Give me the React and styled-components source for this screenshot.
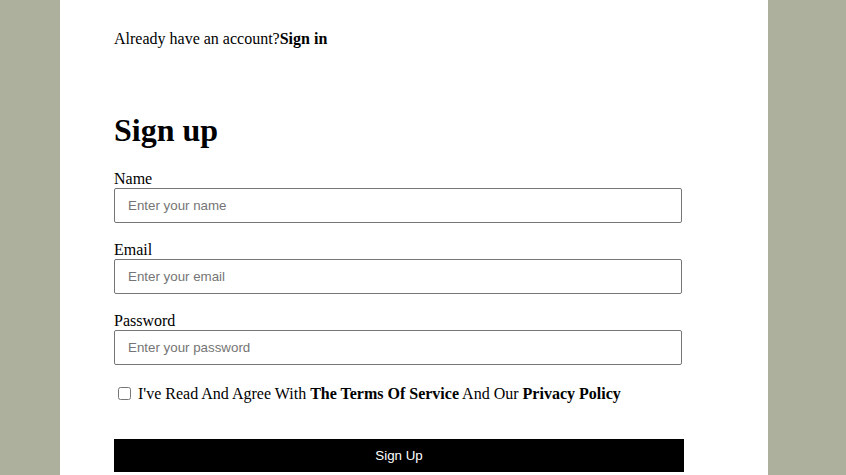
import React from "react";
import styled, { createGlobalStyle } from "styled-components";

const GlobalStyle = createGlobalStyle`
  html, body {
    margin: 0;
    padding: 0;
    background: #aeb09e;
    font-family: "Liberation Serif", "Times New Roman", serif;
    font-size: 16px;
    color: #000;
  }
  * { box-sizing: border-box; }
`;

const Page = styled.div`
  display: flex;
  min-height: 100vh;
`;

const Panel = styled.main`
  margin-left: 60px;
  width: 708px;
  min-height: 100vh;
  background: #fff;
  padding: 30px 54px 40px;
  display: flex;
  flex-direction: column;
`;

const TopLine = styled.p`
  margin: 0;
  line-height: 18px;
`;

const Strong = styled.b`
  font-weight: 700;
`;

const Title = styled.h1`
  margin: 64px 0 22px;
  font-size: 32px;
  line-height: 36px;
  font-weight: 700;
`;

const Form = styled.form`
  display: flex;
  flex-direction: column;
`;

const Field = styled.div`
  display: flex;
  flex-direction: column;
  margin-bottom: 18px;
`;

const Label = styled.label`
  line-height: 18px;
`;

const Input = styled.input`
  width: 568px;
  height: 35px;
  padding: 0 13px;
  border: 1px solid #767676;
  border-radius: 2px;
  font-family: "Liberation Sans", Arial, sans-serif;
  font-size: 13.333px;
  color: #000;
  background: #fff;
  &::placeholder {
    color: #757575;
  }
`;

const CheckRow = styled.div`
  display: flex;
  align-items: center;
  margin-top: 1px;
  line-height: 18px;
`;

const Check = styled.input`
  width: 13px;
  height: 13px;
  margin: 3px 3px 3px 4px;
`;

const CheckText = styled.label`
  margin-left: 4px;
`;

const Submit = styled.button`
  margin-top: 36px;
  width: 570px;
  height: 33px;
  border: none;
  border-radius: 0;
  background: #000;
  color: #fff;
  font-family: "Liberation Sans", Arial, sans-serif;
  font-size: 13.333px;
  cursor: pointer;
`;

export default function App() {
  return (
    <>
      <GlobalStyle />
      <Page>
        <Panel>
          <TopLine>
            Already have an account?<Strong>Sign in</Strong>
          </TopLine>
          <Title>Sign up</Title>
          <Form onSubmit={(e) => e.preventDefault()}>
            <Field>
              <Label htmlFor="name">Name</Label>
              <Input id="name" type="text" placeholder="Enter your name" />
            </Field>
            <Field>
              <Label htmlFor="email">Email</Label>
              <Input id="email" type="email" placeholder="Enter your email" />
            </Field>
            <Field>
              <Label htmlFor="password">Password</Label>
              <Input id="password" type="password" placeholder="Enter your password" />
            </Field>
            <CheckRow>
              <Check id="agree" type="checkbox" />
              <CheckText htmlFor="agree">
                I've Read And Agree With <Strong>The Terms Of Service</Strong> And Our{" "}
                <Strong>Privacy Policy</Strong>
              </CheckText>
            </CheckRow>
            <Submit type="submit">Sign Up</Submit>
          </Form>
        </Panel>
      </Page>
    </>
  );
}
